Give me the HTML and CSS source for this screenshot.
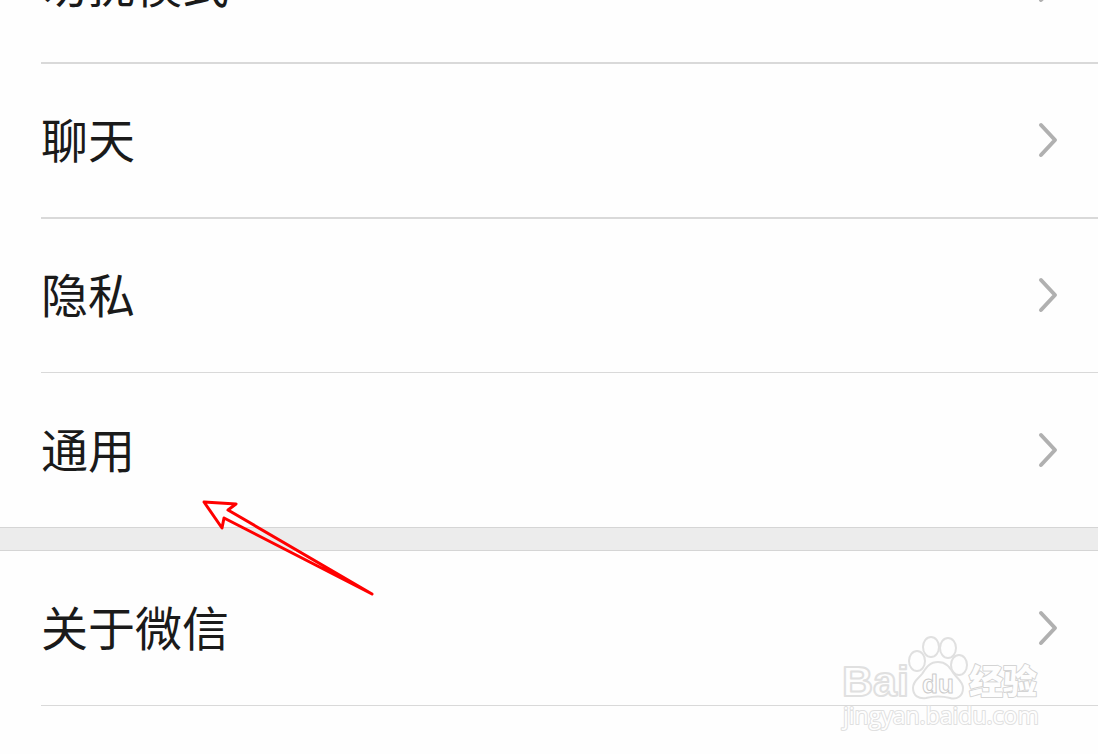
FILE: index.html
```html
<!DOCTYPE html>
<html lang="zh-CN">
<head>
  <meta charset="utf-8">
  <title>设置</title>
  <link rel="stylesheet" href="styles.css">
</head>
<body>
  <main class="settings">
    <nav class="group group-scrolled">
      <a class="row row-thick" href="#dnd">
        <span class="label">勿扰模式</span>
        <svg class="chevron" viewBox="0 0 20 36"><path d="M3 3 L17 18 L3 33"/></svg>
      </a>
      <a class="row row-thick" href="#chat">
        <span class="label">聊天</span>
        <svg class="chevron" viewBox="0 0 20 36"><path d="M3 3 L17 18 L3 33"/></svg>
      </a>
      <a class="row" href="#privacy">
        <span class="label">隐私</span>
        <svg class="chevron" viewBox="0 0 20 36"><path d="M3 3 L17 18 L3 33"/></svg>
      </a>
      <a class="row row-last" href="#general">
        <span class="label">通用</span>
        <svg class="chevron" viewBox="0 0 20 36"><path d="M3 3 L17 18 L3 33"/></svg>
      </a>
    </nav>
    <div class="band"></div>
    <nav class="group group-about">
      <a class="row" href="#about">
        <span class="label">关于微信</span>
        <svg class="chevron" viewBox="0 0 20 36"><path d="M3 3 L17 18 L3 33"/></svg>
      </a>
    </nav>
  </main>

  <!-- arrow pointing at 通用 -->
  <svg class="arrow" viewBox="0 0 180 104">
    <path d="M172 98 L28 14 L36 8 L4 6 L22 32 L24 22 Z"/>
  </svg>

  <svg class="watermark" viewBox="0 0 204 104">
    <text class="brand" x="2" y="64">Bai</text>
    <ellipse cx="77" cy="29" rx="8" ry="10"/>
    <ellipse cx="91" cy="15" rx="8" ry="10"/>
    <ellipse cx="108" cy="16" rx="8" ry="10"/>
    <ellipse cx="119" cy="33" rx="8" ry="10"/>
    <path d="M98 30 C89 30 86 36 82 42 C78 47 73 49 73 56 C73 64 79 67 86 66 C94 64 102 64 110 66 C117 68 123 64 123 56 C123 50 118 47 114 42 C110 36 107 30 98 30 Z"/>
    <text class="du" x="82" y="61">du</text>
    <text class="brand-cn" x="129" y="62">经验</text>
    <text class="site" x="3" y="92">jingyan.baidu.com</text>
  </svg>
</body>
</html>
```

FILE: styles.css
```css
body {
  margin: 0;
  height: 100vh;
  overflow: hidden;
  position: relative;
  background-color: #fefefe;
  font-family: "Noto Sans CJK SC", sans-serif;
  color: #1a1a1a;
}

.settings {
  display: flow-root;
}

.group {
  padding-left: 41px;
}

/* the list is scrolled part way through its first row */
.group-scrolled {
  margin-top: -91px;
}

.group-about {
  padding-top: 1px;
}

.row {
  display: flex;
  align-items: center;
  justify-content: space-between;
  height: 153px;
  padding-right: 40px;
  border-bottom: 1px solid #d9d9d9;
  font-size: 47px;
  line-height: 70px;
  color: inherit;
  text-decoration: none;
}

.row-thick {
  border-bottom-width: 2px;
}

.row-last {
  height: 154px;
  border-bottom: none;
}

.label {
  padding-bottom: 5px;
}

.band {
  height: 22px;
  background-color: #ececec;
  border-top: 1px solid #d5d5d5;
  border-bottom: 1px solid #d5d5d5;
}

.chevron {
  width: 20px;
  height: 36px;
  padding-bottom: 1px;
  fill: none;
  stroke: #b0b0b0;
  stroke-width: 4;
  stroke-linecap: round;
  stroke-linejoin: round;
}

.arrow {
  position: absolute;
  left: 200px;
  top: 496px;
  width: 180px;
  height: 104px;
  fill: none;
  stroke: #ff0000;
  stroke-width: 3;
  stroke-linecap: round;
  stroke-linejoin: round;
}

.watermark {
  position: absolute;
  right: 54px;
  bottom: 18px;
  width: 204px;
  height: 104px;
  fill: #fefefe;
  stroke: #e0e0e0;
  stroke-width: 2;
  stroke-linejoin: round;
  pointer-events: none;
}

.brand {
  font: bold 43px "Liberation Sans", sans-serif;
}

.du {
  font: bold 26px "Liberation Sans", sans-serif;
  stroke: #cccccc;
  stroke-width: 1;
}

.brand-cn {
  font: 900 34px "Noto Sans CJK SC", sans-serif;
  paint-order: stroke;
  stroke: #d4d4d4;
}

.site {
  font: 23px "Open Sans", sans-serif;
  paint-order: stroke;
}
```
